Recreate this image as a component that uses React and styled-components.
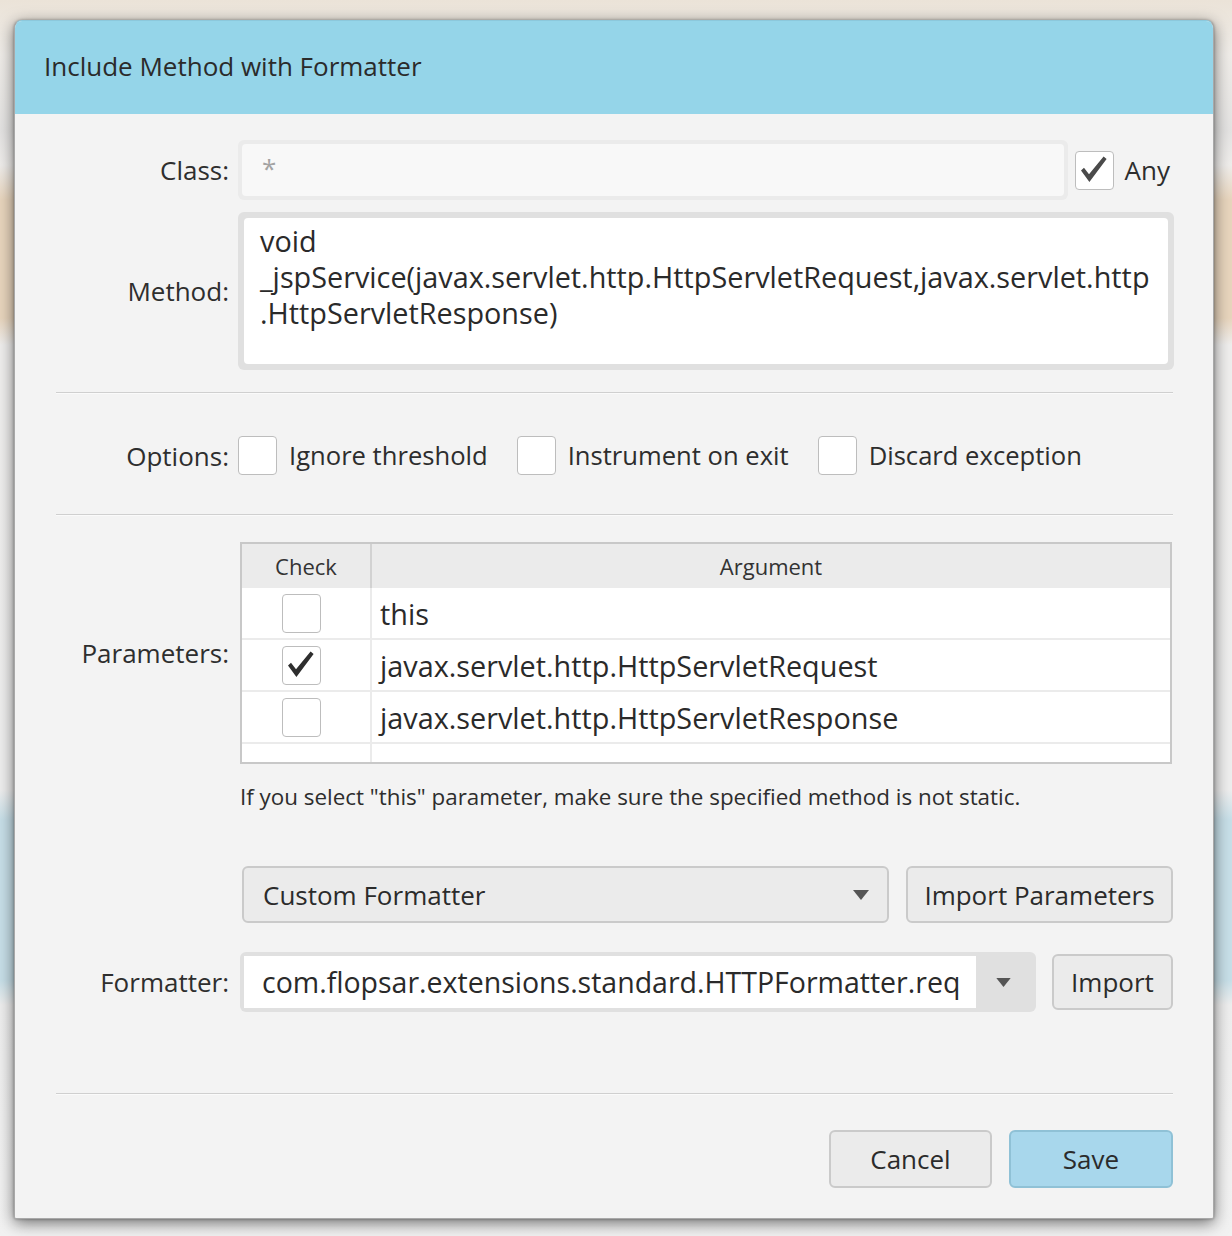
import React from "react";
import styled, { createGlobalStyle } from "styled-components";

const GlobalStyle = createGlobalStyle`
  * { box-sizing: border-box; }
  html, body { margin: 0; padding: 0; }
  body {
    font-family: "Open Sans", "Liberation Sans", sans-serif;
    color: #2d2d2d;
    background: linear-gradient(
      to bottom,
      #ebe3d8 0px,
      #efece8 55px,
      #e4e3e2 130px,
      #efedeb 165px,
      #e8d5bd 200px,
      #e8d5bd 318px,
      #efeeed 345px,
      #eeeeee 790px,
      #c7dfe8 820px,
      #c7dfe8 980px,
      #eeeeee 1005px,
      #f2f2f2 1236px
    );
  }
`;

const Page = styled.div`
  width: 1232px;
  height: 1236px;
  padding: 20px 18px 17px 14px;
`;

const Dialog = styled.div`
  width: 1200px;
  background: #f3f3f3;
  border: 1px solid #a8a8a8;
  border-top-color: #8cc8dc;
  border-radius: 8px 8px 2px 2px;
  overflow: hidden;
  box-shadow: 0 4px 16px rgba(0, 0, 0, 0.55), 0 0 3px rgba(0, 0, 0, 0.35);
`;

const Header = styled.div`
  height: 93px;
  background: #95d5e9;
  display: flex;
  align-items: center;
  padding: 0 0 4px 29px;
  font-size: 26px;
  color: #2b2b2b;
`;

const Body = styled.div`
  padding: 26px 40px 30px 41px;
  display: flex;
  flex-direction: column;
`;

const Row = styled.div`
  display: grid;
  grid-template-columns: 173px 1fr;
  column-gap: 9px;
  align-items: center;
  margin-top: ${(p) => p.$mt || 0}px;
`;

const Label = styled.div`
  text-align: right;
  font-size: 26px;
  color: #2e2e2e;
  white-space: nowrap;
`;

const Line = styled.div`
  height: 2px;
  margin-top: ${(p) => p.$mt || 0}px;
  border-top: 1px solid #cfcfcf;
  border-bottom: 1px solid #fafafa;
`;

const Inline = styled.div`
  display: flex;
  align-items: center;
  gap: ${(p) => p.$gap || 0}px;
  margin-left: ${(p) => p.$ml || 0}px;
  margin-right: ${(p) => p.$mr || 0}px;
`;

const DisabledField = styled.div`
  flex: 1;
  height: 60px;
  padding: 4px;
  border-radius: 6px;
  background: #ebebeb;
  margin-right: 7px;
`;

const FieldInner = styled.div`
  height: 100%;
  border-radius: 4px;
  background: #f8f8f8;
  padding: 6px 0 0 20px;
  font-size: 26px;
  color: #a3a3a3;
`;

const TextArea = styled.div`
  height: 158px;
  padding: 6px;
  border-radius: 6px;
  background: #e0e0e0;
  margin-right: -1px;
`;

const TextAreaInner = styled.div`
  height: 100%;
  background: #ffffff;
  border-radius: 4px;
  padding: 5px 10px 0 16px;
  font-size: 28.8px;
  line-height: 36px;
  color: #2a2a2a;
  word-break: break-all;
`;

const Box = styled.span`
  flex: none;
  width: 39px;
  height: 39px;
  border: 1.5px solid #bdbdbd;
  border-radius: 4px;
  background: #ffffff;
  display: inline-flex;
  align-items: center;
  justify-content: center;
`;

const BoxText = styled.span`
  font-size: ${(p) => p.$size || 25.6}px;
  color: #2d2d2d;
  white-space: nowrap;
`;

const Option = styled.div`
  display: flex;
  align-items: center;
  gap: 12px;
`;

const Table = styled.div`
  margin: 0 1px 0 2px;
  border: 2px solid #c8c8c8;
  background: #ffffff;
  display: grid;
  grid-template-columns: 130px 1fr;
  grid-template-rows: 44px repeat(3, 52px) 18px;
`;

const HeadCell = styled.div`
  background: #ebebeb;
  font-size: 22px;
  color: #333;
  display: flex;
  align-items: center;
  justify-content: center;
  border-right: ${(p) => (p.$first ? "2px solid #d2d2d2" : "none")};
`;

const Cell = styled.div`
  display: flex;
  align-items: center;
  justify-content: ${(p) => (p.$first ? "center" : "flex-start")};
  padding: ${(p) => (p.$first ? "0 10px 0 0" : "0 0 0 8px")};
  border-bottom: ${(p) => (p.$last ? "none" : "2px solid #ebebeb")};
  border-right: ${(p) => (p.$first ? "2px solid #ebebeb" : "none")};
  font-size: 28.8px;
  color: #2a2a2a;
  white-space: nowrap;
`;

const Hint = styled.div`
  margin-left: 2px;
  font-size: 22.4px;
  line-height: 30px;
  color: #2d2d2d;
  white-space: nowrap;
`;

const Select = styled.div`
  flex: 1;
  height: 57px;
  border: 2px solid #cacaca;
  border-radius: 6px;
  background: #ebebeb;
  display: flex;
  align-items: center;
  justify-content: space-between;
  padding: 0 18px 0 19px;
  font-size: 26px;
  color: #2b2b2b;
`;

const Button = styled.button`
  flex: none;
  width: ${(p) => p.$w}px;
  height: ${(p) => p.$h || 57}px;
  border: 2px solid ${(p) => (p.$primary ? "#8fc1d6" : "#cacaca")};
  border-radius: 6px;
  background: ${(p) => (p.$primary ? "#a8d7ec" : "#ebebeb")};
  font-family: inherit;
  font-size: 26px;
  color: #2b2b2b;
  padding: 0;
  cursor: pointer;
`;

const Combo = styled.div`
  flex: 1;
  height: 60px;
  padding: 4px;
  border-radius: 6px;
  background: #e0e0e0;
  display: flex;
`;

const ComboInput = styled.div`
  width: 732px;
  background: #ffffff;
  display: flex;
  align-items: center;
  padding-left: 18px;
  font-size: 28.5px;
  color: #2a2a2a;
  white-space: nowrap;
  overflow: hidden;
`;

const ComboArrow = styled.div`
  flex: 1;
  display: flex;
  align-items: center;
  justify-content: center;
  padding-right: 2px;
`;

const Footer = styled.div`
  display: flex;
  justify-content: flex-end;
  gap: 17px;
  margin-top: 35px;
`;

const Check = ({ color = "#4a4a4a" }) => (
  <svg width="30" height="30" viewBox="0 0 30 30">
    <path
      d="M2 15.5 L5 12.8 L10 19.2 L24.6 1.6 L27.6 4 L10.4 27 Z"
      fill={color}
    />
  </svg>
);

const Caret = ({ w = 16, h = 10 }) => (
  <svg width={w} height={h} viewBox="0 0 16 10">
    <path d="M0 0 L16 0 L8 10 Z" fill="#555" />
  </svg>
);

const CheckBox = ({ checked, color }) => (
  <Box>{checked && <Check color={color} />}</Box>
);

const params = [
  { name: "this", checked: false },
  { name: "javax.servlet.http.HttpServletRequest", checked: true },
  { name: "javax.servlet.http.HttpServletResponse", checked: false },
];

const App = () => {
  return (
    <Page>
      <GlobalStyle />
      <Dialog>
        <Header>Include Method with Formatter</Header>
        <Body>
          <Row>
            <Label>Class:</Label>
            <Inline $mr={3}>
              <DisabledField>
                <FieldInner>*</FieldInner>
              </DisabledField>
              <CheckBox checked />
              <BoxText $size={26} style={{ marginLeft: 11 }}>
                Any
              </BoxText>
            </Inline>
          </Row>

          <Row $mt={12}>
            <Label>Method:</Label>
            <TextArea>
              <TextAreaInner>
                void
                <br />
                _jspService(javax.servlet.http.HttpServletRequest,javax.servlet.http
                <br />
                .HttpServletResponse)
              </TextAreaInner>
            </TextArea>
          </Row>

          <Line $mt={22} />

          <Row $mt={42}>
            <Label>Options:</Label>
            <Inline $gap={29}>
              <Option>
                <CheckBox />
                <BoxText>Ignore threshold</BoxText>
              </Option>
              <Option>
                <CheckBox />
                <BoxText>Instrument on exit</BoxText>
              </Option>
              <Option>
                <CheckBox />
                <BoxText>Discard exception</BoxText>
              </Option>
            </Inline>
          </Row>

          <Line $mt={39} />

          <Row $mt={26}>
            <Label>Parameters:</Label>
            <Table>
              <HeadCell $first>Check</HeadCell>
              <HeadCell>Argument</HeadCell>
              {params.map((p) => (
                <React.Fragment key={p.name}>
                  <Cell $first>
                    <CheckBox checked={p.checked} color="#2e2e2e" />
                  </Cell>
                  <Cell>{p.name}</Cell>
                </React.Fragment>
              ))}
              <Cell $first $last />
              <Cell $last />
            </Table>
          </Row>

          <Row $mt={18}>
            <span />
            <Hint>
              If you select "this" parameter, make sure the specified method is
              not static.
            </Hint>
          </Row>

          <Row $mt={54}>
            <span />
            <Inline $gap={17} $ml={4}>
              <Select>
                <span>Custom Formatter</span>
                <Caret />
              </Select>
              <Button $w={267}>Import Parameters</Button>
            </Inline>
          </Row>

          <Row $mt={29}>
            <Label>Formatter:</Label>
            <Inline $gap={16} $ml={2}>
              <Combo>
                <ComboInput>
                  com.flopsar.extensions.standard.HTTPFormatter.req
                </ComboInput>
                <ComboArrow>
                  <Caret w={15} h={9} />
                </ComboArrow>
              </Combo>
              <Button $w={121} $h={56}>
                Import
              </Button>
            </Inline>
          </Row>

          <Line $mt={81} />

          <Footer>
            <Button $w={163} $h={58}>
              Cancel
            </Button>
            <Button $w={164} $h={58} $primary>
              Save
            </Button>
          </Footer>
        </Body>
      </Dialog>
    </Page>
  );
};

export default App;
